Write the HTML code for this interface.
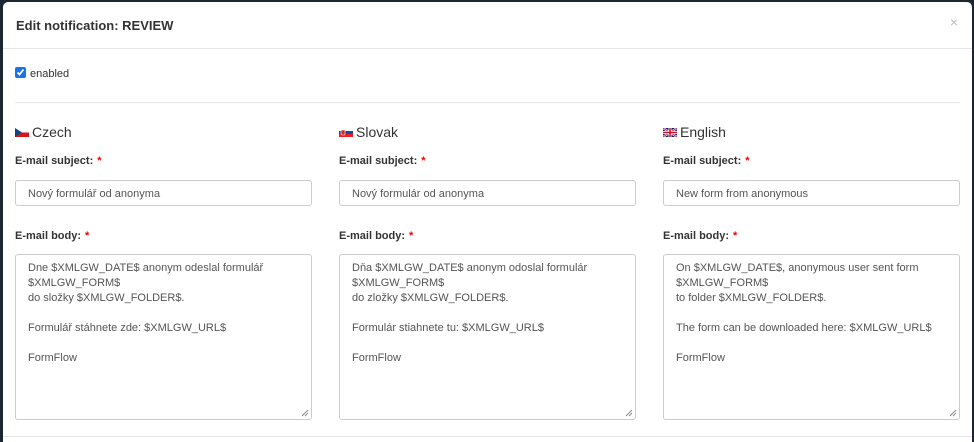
<!DOCTYPE html>
<html><head><meta charset="utf-8"><style>
body{margin:0;width:974px;height:437px;overflow:hidden;background:#1b2630;font-family:"Liberation Sans",sans-serif;color:#333;position:relative}
.modal{position:absolute;left:3px;top:2px;width:969px;height:440px;background:#fff;border-radius:5px 5px 0 0}
.title{position:absolute;left:13px;top:16px;font-size:13px;font-weight:bold;color:#333}
.close{position:absolute;right:14px;top:12px;font-size:14px;color:#bbb}
.hline{position:absolute;left:0;right:0;top:46px;border-top:1px solid #e5e5e5}
.cb{position:absolute;left:12px;top:65px;width:11px;height:11px;background:#1a73e8;border-radius:2px}
.cb svg{position:absolute;left:0;top:0}
.en{position:absolute;left:27px;top:66px;font-size:11px}
.hr2{position:absolute;left:12px;width:945px;top:100px;border-top:1px solid #e5e5e5}
.col{position:absolute;top:0;width:297px}
.lang{position:absolute;top:122px;font-size:14px;white-space:nowrap}
.flag{display:inline-block;width:14px;height:9px;vertical-align:0;margin-right:3px}
.lab{position:absolute;font-size:11px;font-weight:bold;white-space:nowrap}
.lab b{color:#e00;margin-left:4px}
.inp{position:absolute;top:178px;height:26px;border:1px solid #ccc;border-radius:3px;font-size:11px;line-height:26px;padding-left:12px;box-sizing:border-box;width:297px;color:#555}
.ta{position:absolute;top:252px;width:297px;height:166px;border:1px solid #ccc;border-radius:3px;box-sizing:border-box;padding:6px 12px;font-size:11px;line-height:15px;color:#555;white-space:pre}
.rs{position:absolute;right:2px;bottom:2px}
.bot{position:absolute;left:0;right:0;top:434px;border-top:1px solid #e5e5e5}
</style></head><body>
<div class="modal">
<div class="title">Edit notification: REVIEW</div>
<div class="close">×</div>
<div class="hline"></div>
<div class="cb"><svg width="11" height="11"><path d="M2.5 5.5l2 2 4-5" stroke="#fff" stroke-width="1.8" fill="none"/></svg></div>
<div class="en">enabled</div>
<div class="hr2"></div>

<div class="col" style="left:12px">
<div class="lang"><svg class="flag" viewBox="0 0 14 9"><rect width="14" height="4.5" fill="#fff"/><rect y="4.5" width="14" height="4.5" fill="#d7141a"/><path d="M0 0L7 4.5 0 9z" fill="#11457e"/></svg>Czech</div>
<div class="lab" style="top:153px">E-mail subject:<b>*</b></div>
<div class="inp">Nový formulář od anonyma</div>
<div class="lab" style="top:228px">E-mail body:<b>*</b></div>
<div class="ta">Dne $XMLGW_DATE$ anonym odeslal formulář
$XMLGW_FORM$
do složky $XMLGW_FOLDER$.

Formulář stáhnete zde: $XMLGW_URL$

FormFlow<svg class="rs" width="8" height="8"><path d="M1 7L7 1M4 7L7 4" stroke="#888"/></svg></div>
</div>

<div class="col" style="left:336px">
<div class="lang"><svg class="flag" viewBox="0 0 14 9"><rect width="14" height="3" fill="#fff"/><rect y="3" width="14" height="3" fill="#0b4ea2"/><rect y="6" width="14" height="3" fill="#ee1c25"/><rect x="2" y="2" width="4" height="5" rx="1" fill="#ee1c25" stroke="#fff" stroke-width=".6"/></svg>Slovak</div>
<div class="lab" style="top:153px">E-mail subject:<b>*</b></div>
<div class="inp">Nový formulár od anonyma</div>
<div class="lab" style="top:228px">E-mail body:<b>*</b></div>
<div class="ta">Dňa $XMLGW_DATE$ anonym odoslal formulár
$XMLGW_FORM$
do zložky $XMLGW_FOLDER$.

Formulár stiahnete tu: $XMLGW_URL$

FormFlow<svg class="rs" width="8" height="8"><path d="M1 7L7 1M4 7L7 4" stroke="#888"/></svg></div>
</div>

<div class="col" style="left:660px">
<div class="lang"><svg class="flag" viewBox="0 0 14 9"><rect width="14" height="9" fill="#012169"/><path d="M0 0L14 9M14 0L0 9" stroke="#fff" stroke-width="2"/><path d="M0 0L14 9M14 0L0 9" stroke="#c8102e" stroke-width=".8"/><path d="M7 0v9M0 4.5h14" stroke="#fff" stroke-width="3"/><path d="M7 0v9M0 4.5h14" stroke="#c8102e" stroke-width="1.6"/></svg>English</div>
<div class="lab" style="top:153px">E-mail subject:<b>*</b></div>
<div class="inp">New form from anonymous</div>
<div class="lab" style="top:228px">E-mail body:<b>*</b></div>
<div class="ta">On $XMLGW_DATE$, anonymous user sent form
$XMLGW_FORM$
to folder $XMLGW_FOLDER$.

The form can be downloaded here: $XMLGW_URL$

FormFlow<svg class="rs" width="8" height="8"><path d="M1 7L7 1M4 7L7 4" stroke="#888"/></svg></div>
</div>
<div class="bot"></div>
</div>
</body></html>
